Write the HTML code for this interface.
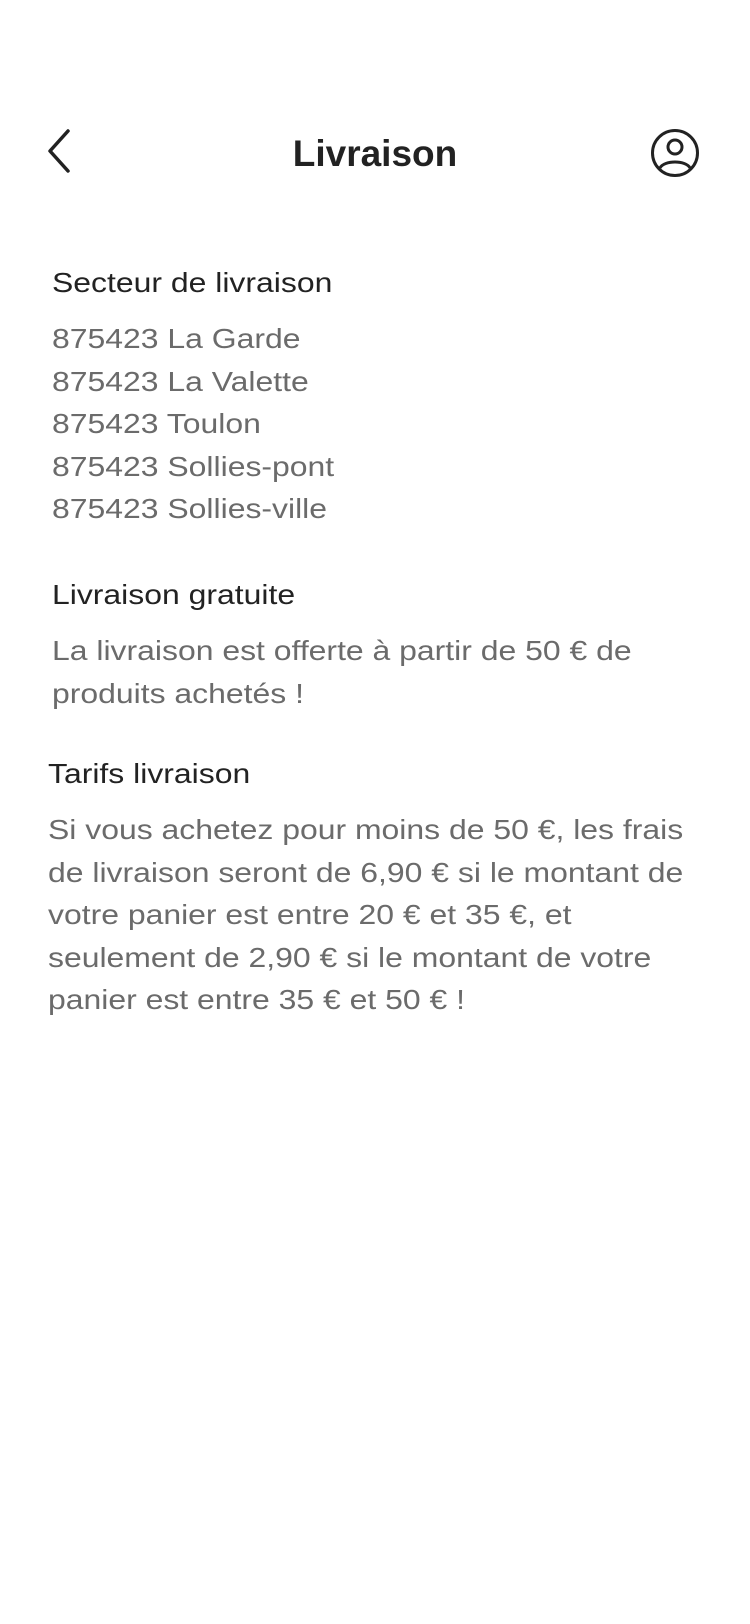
<!DOCTYPE html>
<html><head><meta charset="utf-8"><style>
body{margin:0;width:750px;height:1624px;background:#fff;font-family:"Liberation Sans",sans-serif;position:relative;overflow:hidden}
.t{position:absolute;white-space:nowrap;transform:scaleX(1.14);transform-origin:0 0}
h1{position:absolute;top:129px;left:0;width:750px;text-align:center;margin:0;font-size:37px;font-weight:bold;color:#222;line-height:50px}
.h{font-size:28px;color:#222;line-height:40px}
.b{font-size:28px;color:#6b6b6b;line-height:42.5px}
</style></head><body>
<svg style="position:absolute;left:44px;top:128px" width="32" height="46" viewBox="0 0 32 46"><path d="M24 3 L6 23 L24 43" fill="none" stroke="#222" stroke-width="3.5" stroke-linecap="round" stroke-linejoin="round"/></svg>
<h1>Livraison</h1>
<svg style="position:absolute;left:650px;top:128px" width="50" height="50" viewBox="0 0 50 50"><circle cx="25" cy="25" r="22.5" fill="none" stroke="#222" stroke-width="3"/><circle cx="25" cy="19" r="7" fill="none" stroke="#222" stroke-width="3"/><path d="M10 40 C14 32 36 32 40 40" fill="none" stroke="#222" stroke-width="3"/></svg>
<div class="t h" style="left:52px;top:263px">Secteur de livraison</div>
<div class="t b" style="left:52px;top:318px">875423 La Garde<br>875423 La Valette<br>875423 Toulon<br>875423 Sollies-pont<br>875423 Sollies-ville</div>
<div class="t h" style="left:52px;top:575px">Livraison gratuite</div>
<div class="t b" style="left:52px;top:630px">La livraison est offerte à partir de 50 € de<br>produits achetés !</div>
<div class="t h" style="left:48px;top:754px">Tarifs livraison</div>
<div class="t b" style="left:48px;top:809px">Si vous achetez pour moins de 50 €, les frais<br>de livraison seront de 6,90 € si le montant de<br>votre panier est entre 20 € et 35 €, et<br>seulement de 2,90 € si le montant de votre<br>panier est entre 35 € et 50 € !</div>
</body></html>
